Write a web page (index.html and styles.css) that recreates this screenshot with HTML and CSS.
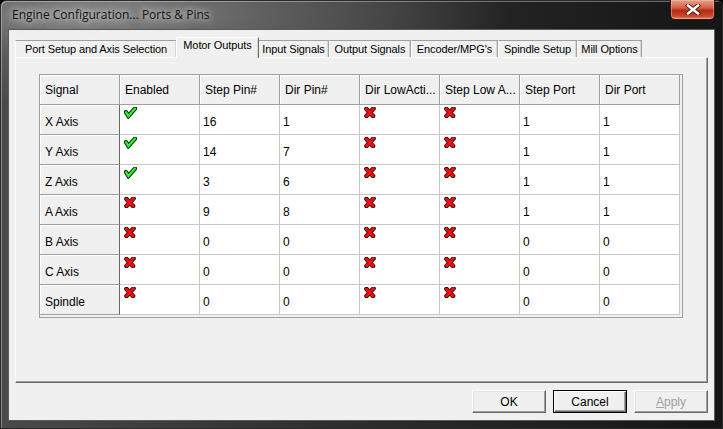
FILE: index.html
```html
<!DOCTYPE html>
<html>
<head>
<meta charset="utf-8">
<link rel="stylesheet" href="styles.css">
</head>
<body>
<div class="window">
  <div class="titlebar">
    <span class="title">Engine Configuration... Ports &amp; Pins</span>
    <div class="close">
      <svg width="16" height="11" viewBox="0 0 16 11"><path d="M3 1.5 L13 9.5 M13 1.5 L3 9.5" stroke="#4a1a10" stroke-width="4.2" stroke-linecap="square"/><path d="M3 1.5 L13 9.5 M13 1.5 L3 9.5" stroke="#fff" stroke-width="2.4" stroke-linecap="square"/></svg>
    </div>
  </div>
  <div class="client">
    <div class="tabs">
      <div class="tab w1">Port Setup and Axis Selection</div>
      <div class="tab w2 active">Motor Outputs</div>
      <div class="tab w3">Input Signals</div>
      <div class="tab w4">Output Signals</div>
      <div class="tab w5">Encoder/MPG's</div>
      <div class="tab w6">Spindle Setup</div>
      <div class="tab w7">Mill Options</div>
    </div>
    <div class="panel">
      <div class="grid">
        <table>
          <thead>
            <tr><th>Signal</th><th>Enabled</th><th>Step Pin#</th><th>Dir Pin#</th><th>Dir LowActi...</th><th>Step Low A...</th><th>Step Port</th><th>Dir Port</th></tr>
          </thead>
          <tbody id="rows"></tbody>
        </table>
      </div>
    </div>
    <div class="buttons">
      <button class="btn">OK</button>
      <button class="btn default">Cancel</button>
      <button class="btn disabled"><u>A</u>pply</button>
    </div>
  </div>
</div>
<script src="app.js"></script>
</body>
</html>
```
FILE: app.js
```js
const CHECK = '<svg class="ico" width="13" height="12" viewBox="0 0 13 12"><path d="M2 5.2 L4.4 9 L11 1.6" fill="none" stroke="#0a2e0a" stroke-width="4.4" stroke-linecap="round" stroke-linejoin="miter"/><path d="M2 5.2 L4.4 9 L11 1.6" fill="none" stroke="#30f030" stroke-width="2.3" stroke-linecap="round" stroke-linejoin="miter"/></svg>';
const CROSS = '<svg class="ico" width="12" height="11" viewBox="0 0 12 11"><path d="M2.5 2 L9 9 M9.5 1.5 L2.5 9" stroke="#300000" stroke-width="4.6" stroke-linecap="round"/><path d="M2.5 2 L9 9 M9.5 1.5 L2.5 9" stroke="#ee1010" stroke-width="2.8" stroke-linecap="round"/></svg>';
const rows = [
  ["X Axis", 1, 16, 1, 1, 1],
  ["Y Axis", 1, 14, 7, 1, 1],
  ["Z Axis", 1, 3, 6, 1, 1],
  ["A Axis", 0, 9, 8, 1, 1],
  ["B Axis", 0, 0, 0, 0, 0],
  ["C Axis", 0, 0, 0, 0, 0],
  ["Spindle", 0, 0, 0, 0, 0]
];
document.getElementById('rows').innerHTML = rows.map(r =>
  '<tr><td class="rh">' + r[0] + '</td>' +
  '<td class="icon">' + (r[1] ? CHECK : CROSS) + '</td>' +
  '<td>' + r[2] + '</td><td>' + r[3] + '</td>' +
  '<td class="icon">' + CROSS + '</td><td class="icon">' + CROSS + '</td>' +
  '<td>' + r[4] + '</td><td>' + r[5] + '</td></tr>'
).join('');
```
FILE: styles.css
```css
html, body {
  margin: 0;
  padding: 0;
  background: #000;
}
.window {
  width: 723px;
  height: 429px;
  box-sizing: border-box;
  padding: 0 7px 7px 7px;
  display: flex;
  flex-direction: column;
  border-radius: 6px 6px 0 0;
  border: 1px solid #2a2a2a;
  background:
    radial-gradient(ellipse 420px 90px at 90px 14px, #8a8a8a 0%, #5c5c5c 45%, rgba(40,40,40,0) 100%),
    linear-gradient(to right, #4a4a4a 0%, #2c2c2c 50%, #151515 100%);
  box-shadow: inset 1px 1px 0 rgba(255,255,255,0.35);
  font-family: "Liberation Sans", Arial, sans-serif;
  font-size: 12px;
  color: #000;
}
.titlebar {
  height: 28px;
  display: flex;
  align-items: center;
  position: relative;
}
.title {
  font-family: "Open Sans", "Liberation Sans", sans-serif;
  font-size: 12px;
  color: #101010;
  padding-left: 4px;
  margin-top: -1px;
  text-shadow: 0 0 6px rgba(230,230,230,0.9), 0 0 10px rgba(210,210,210,0.8), 0 0 14px rgba(200,200,200,0.6);
}
.close {
  position: absolute;
  right: 0;
  top: -1px;
  width: 43px;
  height: 19px;
  border: 1px solid #3a1008;
  border-top: none;
  border-radius: 0 0 5px 5px;
  background: linear-gradient(to bottom, #e8a08c 0%, #d2634a 40%, #b42a10 55%, #c8482c 85%, #de8a6c 100%);
  box-shadow: inset 0 0 0 1px rgba(255,200,180,0.45);
  display: flex;
  align-items: center;
  justify-content: center;
}
.client {
  flex: 1;
  background: #f0f0f0;
  border: 1px solid #5a5a5a;
  padding: 7px 6px 7px 6px;
  display: flex;
  flex-direction: column;
}
.tabs {
  display: flex;
  height: 20px;
  align-items: flex-end;
  position: relative;
  z-index: 2;
}
.tab {
  height: 17px;
  box-sizing: border-box;
  border: 1px solid #a0a0a0;
  border-bottom: none;
  border-left-color: #fff;
  background: #f0f0f0;
  box-shadow: inset -1px 0 0 #d8d8d8;
  padding-top: 2px;
  text-align: center;
  white-space: nowrap;
  font-size: 11px;
  letter-spacing: -0.1px;
}
.tab.active {
  height: 21px;
  margin: 0 -1px -1px -1px;
  padding-top: 1px;
  border-color: #fff #a0a0a0 #f0f0f0 #fff;
  border-right-color: #696969;
  position: relative;
  z-index: 3;
}
.w1 { width: 162px; }
.w2 { width: 83px; }
.w3 { width: 71px; }
.w4 { width: 82px; }
.w5 { width: 87px; }
.w6 { width: 79px; }
.w7 { width: 65px; }
.panel {
  flex: 1;
  border: 1px solid;
  border-color: #fff #696969 #696969 #fff;
  box-shadow: inset -1px -1px 0 #a0a0a0;
  padding: 16px 0 0 23px;
}
.grid {
  width: 642px;
  height: 242px;
  border: 1px solid #a0a0a0;
  background: #f0f0f0;
}
table {
  border-collapse: separate;
  border-spacing: 0;
  table-layout: fixed;
}
th, td {
  width: 79px;
  height: 29px;
  padding: 0;
  border-right: 1px solid #c8c8c8;
  border-bottom: 1px solid #c8c8c8;
  text-align: left;
  font-weight: normal;
  white-space: nowrap;
  overflow: hidden;
}
th {
  background: #f0f0f0;
  border-right-color: #a0a0a0;
  border-bottom-color: #a0a0a0;
  box-shadow: inset 1px 1px 0 #fff;
  padding-left: 5px;
  width: 74px;
  vertical-align: middle;
}
td {
  background: #fff;
  padding-left: 3px;
  width: 76px;
  vertical-align: middle;
  padding-top: 5px;
  height: 24px;
}
td.rh {
  background: #f0f0f0;
  border-right: 1px solid #696969;
  border-bottom-color: #a0a0a0;
  box-shadow: inset 1px 1px 0 #fff;
  padding-left: 5px;
  width: 74px;
  padding-top: 4px;
  height: 25px;
}
td.icon {
  vertical-align: top;
  padding-top: 2px;
  padding-left: 4px;
  width: 75px;
  height: 27px;
}
.ico { display: block; }
.buttons {
  display: flex;
  justify-content: flex-end;
  gap: 7px;
  margin-top: 7px;
  padding-right: 0;
}
.btn {
  width: 74px;
  height: 23px;
  box-sizing: border-box;
  background: #f0f0f0;
  border: 1px solid;
  border-color: #fff #696969 #696969 #fff;
  box-shadow: inset -1px -1px 0 #a0a0a0, inset 1px 1px 0 #e3e3e3;
  font-family: "Liberation Sans", Arial, sans-serif;
  font-size: 12px;
  color: #000;
  padding: 0;
}
.btn.default {
  border: 1px solid #000;
  box-shadow: inset 1px 1px 0 #fff, inset -1px -1px 0 #696969, inset -2px -2px 0 #a0a0a0;
}
.btn.disabled {
  color: #a0a0a0;
}
```
